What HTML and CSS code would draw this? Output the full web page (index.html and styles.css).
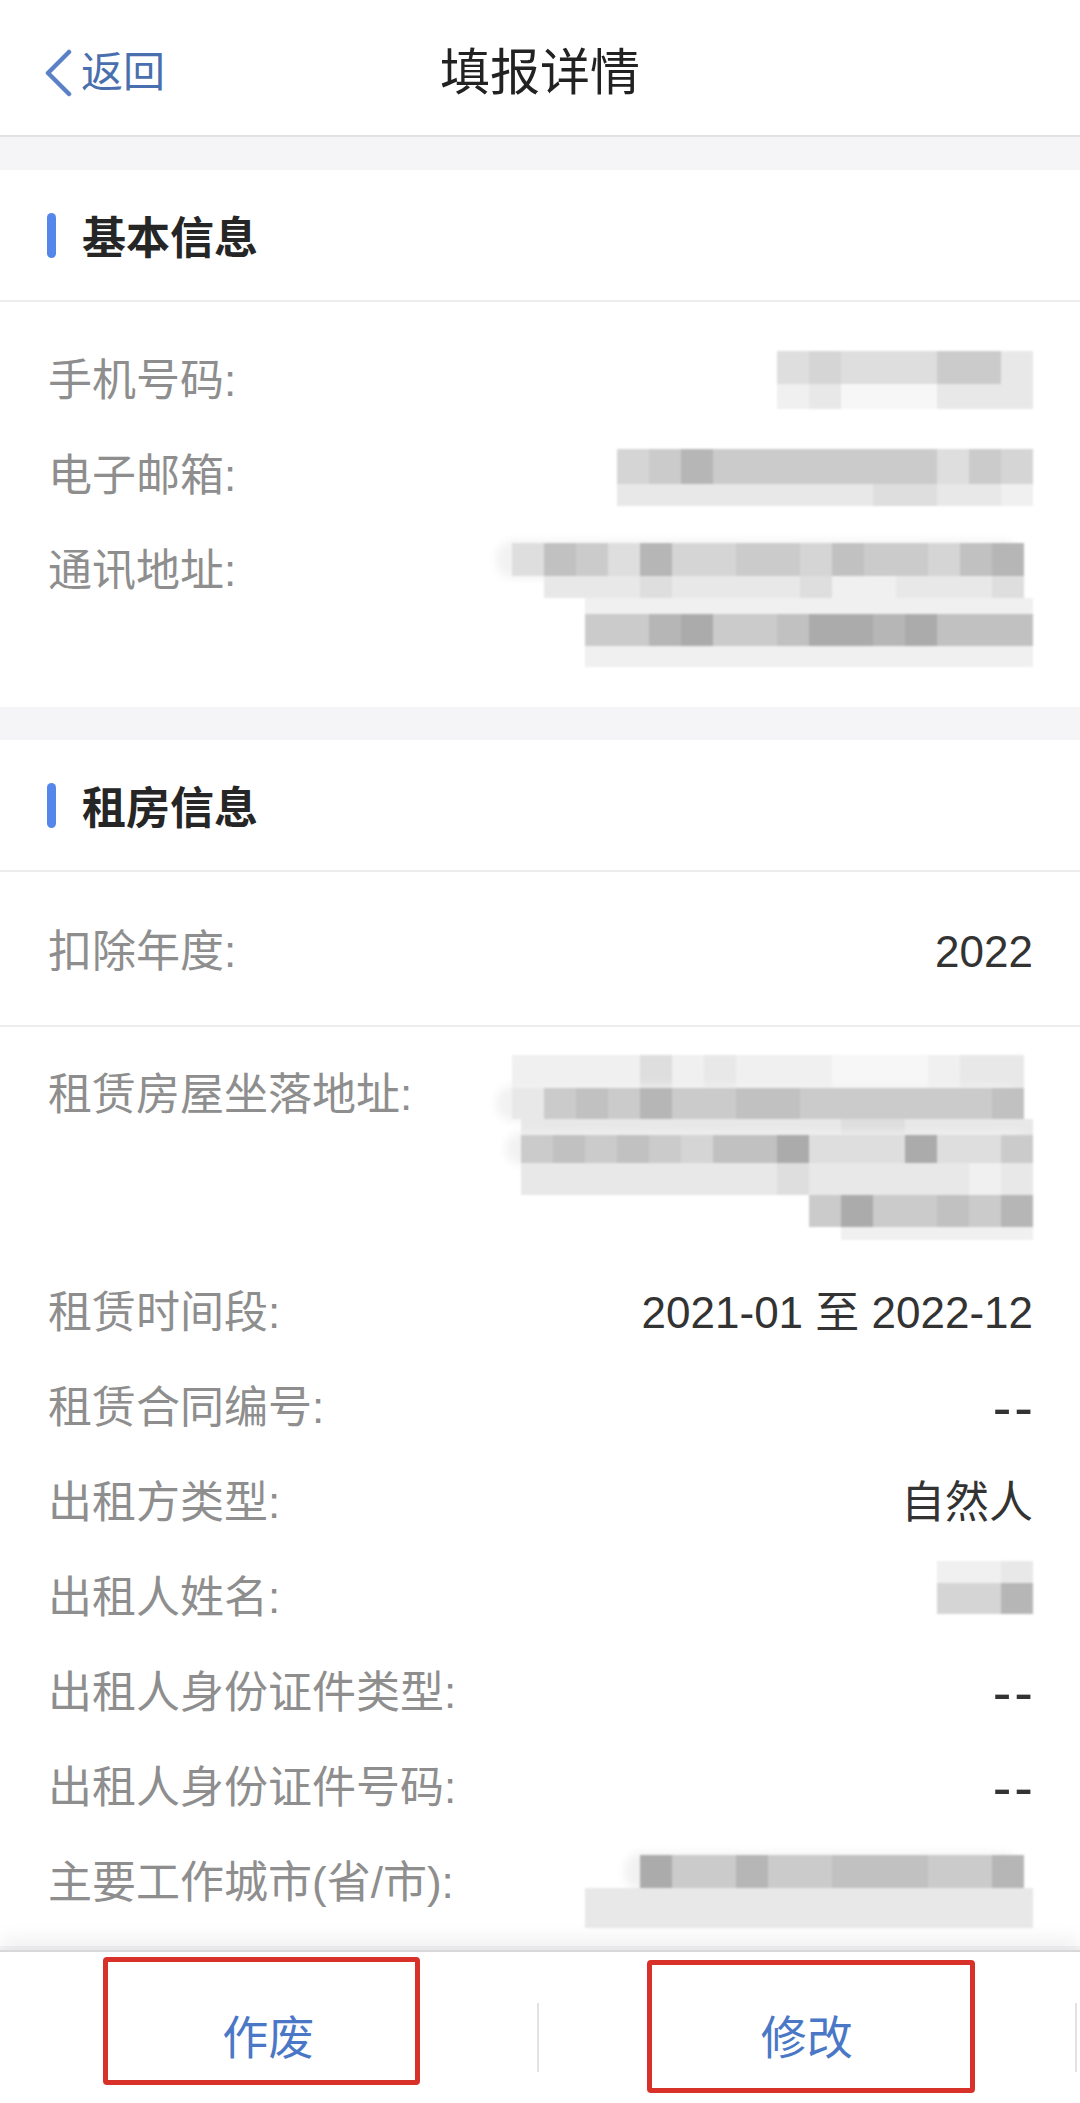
FILE: index.html
```html
<!DOCTYPE html>
<html lang="zh-CN">
<head>
<meta charset="utf-8">
<title>填报详情</title>
<link rel="stylesheet" href="styles.css">
</head>
<body>
<div class="page">
  <header class="topbar">
    <div class="back">
      <svg viewBox="0 0 28 48" aria-hidden="true"><polyline points="25,3 4,24 25,45" fill="none" stroke="#5a80c8" stroke-width="4.5" stroke-linecap="round" stroke-linejoin="round"/></svg>
      <span>返回</span>
    </div>
    <h1 class="title">填报详情</h1>
    <div></div>
  </header>

  <main class="content">
    <section class="card">
      <div class="card-title"><span class="bar"></span><h2>基本信息</h2></div>
      <div class="group g-basic">
        <div class="row">
          <span class="label">手机号码:</span>
          <div class="mosaic">
            <div class="mr h33"><i class="s3"></i><i class="s4"></i><i class="s3"></i><i class="s3"></i><i class="s3"></i><i class="s5"></i><i class="s5"></i><i class="s2"></i></div>
            <div class="mr h25"><i class="s1"></i><i class="s2"></i><i class="s0"></i><i class="s0"></i><i class="s0"></i><i class="s2"></i><i class="s2"></i><i class="s2"></i></div>
          </div>
        </div>
        <div class="row">
          <span class="label">电子邮箱:</span>
          <div class="mosaic m-email">
            <div class="mr h35"><i class="s4"></i><i class="s5"></i><i class="s7"></i><i class="s5"></i><i class="s5"></i><i class="s5"></i><i class="s5"></i><i class="s5"></i><i class="s5"></i><i class="s5"></i><i class="s3"></i><i class="s5"></i><i class="s4"></i></div>
            <div class="mr h22"><i class="s2"></i><i class="s2"></i><i class="s2"></i><i class="s2"></i><i class="s2"></i><i class="s2"></i><i class="s2"></i><i class="s2"></i><i class="s3"></i><i class="s3"></i><i class="s2"></i><i class="s2"></i><i class="s1"></i></div>
          </div>
        </div>
        <div class="row">
          <span class="label">通讯地址:</span>
          <div class="mosaic m-addr">
            <div class="mr h33 off9 glow"><i class="s3"></i><i class="s6"></i><i class="s5"></i><i class="s3"></i><i class="s7"></i><i class="s4"></i><i class="s4"></i><i class="s5"></i><i class="s5"></i><i class="s4"></i><i class="s6"></i><i class="s5"></i><i class="s5"></i><i class="s4"></i><i class="s6"></i><i class="s7"></i></div>
            <div class="mr h22 off9"><i class="s2"></i><i class="s2"></i><i class="s2"></i><i class="s3"></i><i class="s2"></i><i class="s2"></i><i class="s2"></i><i class="s2"></i><i class="s3"></i><i class="s1"></i><i class="s1"></i><i class="s2"></i><i class="s2"></i><i class="s2"></i><i class="s3"></i></div>
            <div class="mr h16"><i class="s1"></i><i class="s1"></i><i class="s1"></i><i class="s1"></i><i class="s1"></i><i class="s1"></i><i class="s1"></i><i class="s1"></i><i class="s1"></i><i class="s1"></i><i class="s1"></i><i class="s1"></i><i class="s1"></i><i class="s1"></i></div>
            <div class="mr h32"><i class="s5"></i><i class="s5"></i><i class="s7"></i><i class="s8"></i><i class="s5"></i><i class="s5"></i><i class="s6"></i><i class="s8"></i><i class="s8"></i><i class="s7"></i><i class="s8"></i><i class="s6"></i><i class="s6"></i><i class="s6"></i></div>
            <div class="mr h21"><i class="s1"></i><i class="s1"></i><i class="s1"></i><i class="s1"></i><i class="s1"></i><i class="s1"></i><i class="s1"></i><i class="s1"></i><i class="s1"></i><i class="s1"></i><i class="s1"></i><i class="s1"></i><i class="s1"></i><i class="s1"></i></div>
          </div>
        </div>
      </div>
    </section>

    <section class="card">
      <div class="card-title"><span class="bar"></span><h2>租房信息</h2></div>
      <div class="group g-year">
        <div class="row">
          <span class="label">扣除年度:</span>
          <span class="value">2022</span>
        </div>
      </div>
      <div class="group g-rent">
        <div class="row">
          <span class="label">租赁房屋坐落地址:</span>
          <div class="mosaic m-rent">
            <div class="mr h33 off9"><i class="s1"></i><i class="s1"></i><i class="s1"></i><i class="s1"></i><i class="s3"></i><i class="s1"></i><i class="s2"></i><i class="s1"></i><i class="s1"></i><i class="s1"></i><i class="s0"></i><i class="s0"></i><i class="s0"></i><i class="s1"></i><i class="s2"></i><i class="s2"></i></div>
            <div class="mr h31 off9 glow"><i class="s2"></i><i class="s5"></i><i class="s6"></i><i class="s5"></i><i class="s7"></i><i class="s5"></i><i class="s5"></i><i class="s6"></i><i class="s6"></i><i class="s5"></i><i class="s5"></i><i class="s5"></i><i class="s5"></i><i class="s5"></i><i class="s5"></i><i class="s6"></i></div>
            <div class="mr h16"><i class="s2"></i><i class="s2"></i><i class="s2"></i><i class="s2"></i><i class="s2"></i><i class="s2"></i><i class="s2"></i><i class="s2"></i><i class="s2"></i><i class="s2"></i><i class="s3"></i><i class="s3"></i><i class="s2"></i><i class="s2"></i><i class="s2"></i><i class="s2"></i></div>
            <div class="mr h28 glow"><i class="s5"></i><i class="s6"></i><i class="s5"></i><i class="s6"></i><i class="s5"></i><i class="s4"></i><i class="s6"></i><i class="s6"></i><i class="s8"></i><i class="s3"></i><i class="s3"></i><i class="s3"></i><i class="s8"></i><i class="s3"></i><i class="s3"></i><i class="s5"></i></div>
            <div class="mr h32"><i class="s2"></i><i class="s2"></i><i class="s2"></i><i class="s2"></i><i class="s2"></i><i class="s2"></i><i class="s2"></i><i class="s2"></i><i class="s3"></i><i class="s2"></i><i class="s2"></i><i class="s2"></i><i class="s2"></i><i class="s2"></i><i class="s1"></i><i class="s2"></i></div>
            <div class="mr h32"><i class="s5"></i><i class="s8"></i><i class="s5"></i><i class="s5"></i><i class="s6"></i><i class="s5"></i><i class="s7"></i></div>
            <div class="mr h13"><i class="s1"></i><i class="s1"></i><i class="s1"></i><i class="s1"></i><i class="s1"></i><i class="s1"></i></div>
          </div>
        </div>
        <div class="row">
          <span class="label">租赁时间段:</span>
          <span class="value">2021-01 至 2022-12</span>
        </div>
        <div class="row">
          <span class="label">租赁合同编号:</span>
          <span class="value dash">--</span>
        </div>
        <div class="row">
          <span class="label">出租方类型:</span>
          <span class="value">自然人</span>
        </div>
        <div class="row">
          <span class="label">出租人姓名:</span>
          <div class="mosaic m-name">
            <div class="mr h22"><i class="s1"></i><i class="s1"></i><i class="s2"></i></div>
            <div class="mr h31"><i class="s4"></i><i class="s4"></i><i class="s7"></i></div>
          </div>
        </div>
        <div class="row">
          <span class="label">出租人身份证件类型:</span>
          <span class="value dash">--</span>
        </div>
        <div class="row">
          <span class="label">出租人身份证件号码:</span>
          <span class="value dash">--</span>
        </div>
        <div class="row">
          <span class="label">主要工作城市(省/市):</span>
          <div class="mosaic m-city">
            <div class="mr h33 off9 glow"><i class="s8"></i><i class="s5"></i><i class="s5"></i><i class="s7"></i><i class="s5"></i><i class="s5"></i><i class="s6"></i><i class="s6"></i><i class="s6"></i><i class="s5"></i><i class="s5"></i><i class="s7"></i></div>
            <div class="mr h40"><i class="s2"></i><i class="s2"></i><i class="s2"></i><i class="s2"></i><i class="s2"></i><i class="s2"></i><i class="s2"></i><i class="s2"></i><i class="s2"></i><i class="s2"></i><i class="s2"></i><i class="s2"></i><i class="s2"></i><i class="s2"></i></div>
          </div>
        </div>
      </div>
    </section>
  </main>

  <footer class="actions">
    <div class="act"><span class="mark mark-a"></span>作废</div>
    <span class="sep"></span>
    <div class="act"><span class="mark mark-b"></span>修改</div>
    <span class="sep sep-end"></span>
  </footer>
</div>
</body>
</html>
```

FILE: styles.css
```css
* { box-sizing: border-box; }
html, body { margin: 0; padding: 0; }
body {
  font-family: "Liberation Sans", "Noto Sans CJK SC", sans-serif;
  color: #333;
  background: #f5f5f7;
}
.page {
  height: 2103px;
  display: flex;
  flex-direction: column;
  overflow: hidden;
}

/* top navigation */
.topbar {
  flex: none;
  height: 137px;
  padding-top: 11px;
  background: #fff;
  border-bottom: 2px solid #e2e2e4;
  display: grid;
  grid-template-columns: 1fr auto 1fr;
  align-items: center;
}
.back {
  display: flex;
  align-items: center;
  padding-left: 44px;
  color: #4a6fae;
  font-size: 42px;
  line-height: 1;
}
.back svg { width: 28px; height: 48px; margin-right: 9px; }
.title {
  margin: 0;
  font-size: 50px;
  font-weight: 400;
  color: #222;
  line-height: 1;
}

/* content */
.content {
  flex: 1;
  overflow: hidden;
  padding-top: 33px;
}
.card { background: #fff; }
.card + .card { margin-top: 33px; }
.card-title {
  height: 132px;
  display: flex;
  align-items: center;
  padding-left: 47px;
  border-bottom: 2px solid #ececee;
}
.bar {
  width: 9px;
  height: 45px;
  border-radius: 5px;
  background: #5587ea;
  margin-right: 26px;
}
.card-title h2 {
  margin: 0;
  font-size: 44px;
  font-weight: 700;
  color: #262626;
}

.group { padding: 31.5px 47px 22.5px 48px; }
.g-year {
  padding: 32px 47px 26px 48px;
  border-bottom: 2px solid #ececee;
}
.g-rent { padding: 20.5px 47px 0 48px; }

.row {
  display: flex;
  justify-content: space-between;
  align-items: flex-start;
  padding: 17.5px 0;
}
.label {
  font-size: 44px;
  line-height: 60px;
  color: #8e8e8e;
  white-space: nowrap;
}
.value {
  font-size: 44px;
  line-height: 60px;
  color: #333;
  white-space: nowrap;
}
.value.dash {
  font-size: 56px;
  letter-spacing: 3px;
  margin-right: -3px;
}

/* blurred (mosaic) private values */
.mosaic {
  display: flex;
  flex-direction: column;
  align-items: flex-end;
  filter: blur(0.8px);
}
.m-email { margin-top: 3px; }
.m-addr { margin-top: 2px; }
.m-rent { margin-top: -10px; margin-bottom: 8px; }
.m-name { margin-top: -7px; }
.m-city { margin-top: 2px; }
.mr { display: flex; }
.mr i { display: block; width: 32px; }
.glow { box-shadow: -14px 0 10px 2px #f2f2f2; border-radius: 14px 0 0 14px; }
.off9 { margin-right: 9px; }
.h13 { height: 13px; }
.h16 { height: 16px; }
.h21 { height: 21px; }
.h22 { height: 22px; }
.h25 { height: 25px; }
.h28 { height: 28px; }
.h31 { height: 31px; }
.h32 { height: 32px; }
.h33 { height: 33px; }
.h35 { height: 35px; }
.h40 { height: 40px; }
.s0 { background: #f7f7f7; }
.s1 { background: #f0f0f0; }
.s2 { background: #e8e8e8; }
.s3 { background: #dedede; }
.s4 { background: #d5d5d5; }
.s5 { background: #cbcbcb; }
.s6 { background: #c1c1c1; }
.s7 { background: #b6b6b6; }
.s8 { background: #ababab; }

/* bottom action bar */
.actions {
  flex: none;
  height: 153px;
  background: #fff;
  border-top: 2px solid #d8d8d8;
  box-shadow: 0 -12px 18px rgba(0, 0, 0, 0.06);
  display: flex;
  position: relative;
  z-index: 1;
}
.act {
  flex: 1;
  position: relative;
  text-align: center;
  padding-top: 56px;
  font-size: 46px;
  line-height: 60px;
  color: #4a78c6;
}
.sep {
  flex: none;
  width: 2px;
  height: 69px;
  margin-top: 51px;
  background: #e2e2e2;
}
.sep-end { margin-right: 3px; }

/* red annotation boxes */
.mark {
  position: absolute;
  border: 5px solid #d8312a;
  border-radius: 4px;
}
.mark-a { left: 103px; top: 5px; width: 317px; height: 128px; }
.mark-b { left: 108px; top: 8px; width: 328px; height: 133px; }
```
